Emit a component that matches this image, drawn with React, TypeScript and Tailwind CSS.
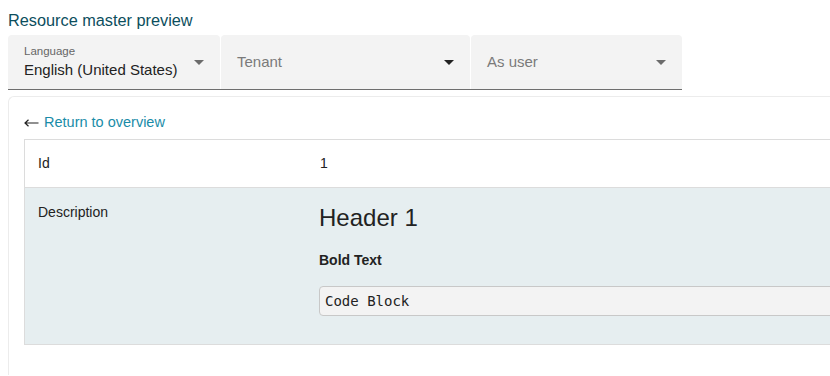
import React from "react";

function Arrow({ dark }: { dark?: boolean }) {
  return (
    <svg width="10" height="5" viewBox="0 0 10 5" className="shrink-0">
      <path d="M0 0 L10 0 L5 5 Z" fill={dark ? "#222" : "#6b6b6b"} />
    </svg>
  );
}

function Field({
  label,
  value,
  placeholder,
  dark,
  width,
}: {
  label?: string;
  value?: string;
  placeholder?: string;
  dark?: boolean;
  width: string;
}) {
  return (
    <div className={`${width} h-[54px] bg-[#f3f3f3] rounded-t-[4px] flex items-center pl-4 pr-[16px]`}>
      <div className="flex-1 min-w-0">
        {label ? (
          <div className="flex flex-col pt-[1px]">
            <span className="text-[11.5px] leading-[13px] text-[#666]">{label}</span>
            <span className="text-[15px] leading-[22px] text-[#222] pt-[1px]">{value}</span>
          </div>
        ) : (
          <span className="text-[15px] leading-[20px] text-[#7a7a7a]">{placeholder}</span>
        )}
      </div>
      <Arrow dark={dark} />
    </div>
  );
}

export default function App() {
  return (
    <div
      className="w-[830px] h-[376px] overflow-hidden bg-white"
      style={{ fontFamily: '"Liberation Sans", Arial, sans-serif' }}
    >
      <div className="pl-2 pt-[9px]">
        <h1 className="text-[16.3px] leading-[22px] text-[#0c4e5d]">Resource master preview</h1>
        <div className="mt-[4px] flex w-[674px] border-b border-[#6e6e6e] gap-[1px]">
          <Field width="w-[212px]" label="Language" value="English (United States)" />
          <Field width="w-[249px]" placeholder="Tenant" dark />
          <Field width="w-[211px]" placeholder="As user" />
        </div>
        <div className="mt-[6px] w-[900px] border-l border-t border-[#ececec] rounded-tl-[6px] pl-[15px] pt-[15px] pb-[30px]">
          <div className="flex items-center text-[14.5px] leading-[20px]">
            <svg width="15" height="8" viewBox="0 0 15 8" className="mr-[5px] mt-[1px]">
              <path d="M14.5 4 H1 M4.5 0.8 L1 4 L4.5 7.2" stroke="#222" strokeWidth="1.2" fill="none" />
            </svg>
            <span className="text-[#1a8ca8]">Return to overview</span>
          </div>
          <div className="mt-[7px] border-t border-l border-b border-[#dcdcdc] text-[14px] text-[#222]">
            <div className="flex h-[48px] items-center border-b border-[#dcdcdc]">
              <div className="w-[281px] pl-[13px]">Id</div>
              <div className="pl-[14px]">1</div>
            </div>
            <div className="flex bg-[#e6eef0] h-[156px]">
              <div className="w-[281px] pl-[13px] pt-[16px] leading-[16px]">Description</div>
              <div className="flex-1 pl-[13px] pt-[15px]">
                <div className="text-[24px] leading-[30px] text-[#222]">Header 1</div>
                <div className="mt-[17px] font-bold text-[14px] leading-[20px]">Bold Text</div>
                <div
                  className="mt-[16px] h-[30px] border border-[#c8c8c8] rounded-[4px] bg-[#f3f3f3] flex items-center pl-[5px] text-[14px] text-[#222]"
                  style={{ fontFamily: '"DejaVu Sans Mono", monospace' }}
                >
                  Code Block
                </div>
              </div>
            </div>
          </div>
        </div>
      </div>
    </div>
  );
}
